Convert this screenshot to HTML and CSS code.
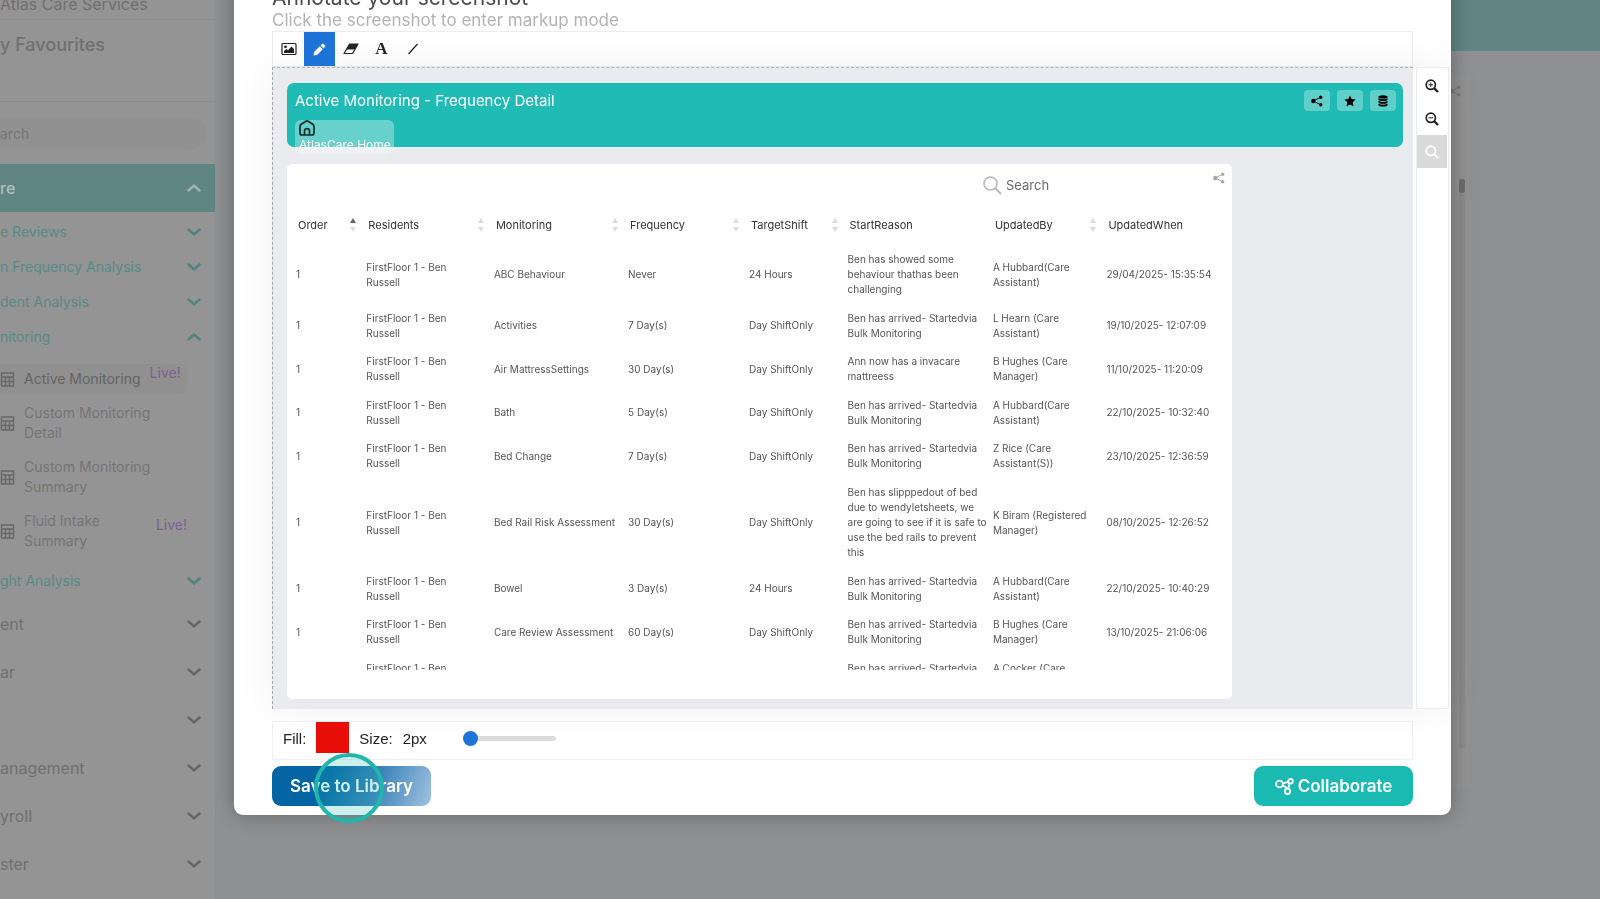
FILE: index.html
```html
<!DOCTYPE html>
<html lang="en">

<head>
    <meta charset="UTF-8">
    <meta name="viewport" content="width=device-width, initial-scale=1.0">
    <title>Active Monitoring - Frequency Detail</title>
    <link rel="stylesheet" href="styles.css">
</head>

<body>
    <svg class="sprite" aria-hidden="true">
        <symbol id="chevron" viewBox="0 0 14 8">
            <path d="M1.5 1.5 7 6.3l5.500-4.800" fill="none" stroke="currentColor" stroke-width="2.400" stroke-linecap="round" />
        </symbol>
        <symbol id="grid" viewBox="0 0 14 15">
            <path d="M1 1h12v13H1zM1 5h12M1 9.500h12M5 5v9M9 5v9" fill="none" stroke="currentColor" stroke-width="1.400" />
        </symbol>
        <symbol id="share" viewBox="0 0 12 12">
            <path d="M9.500 2.200 2.500 6l7 3.800" fill="none" stroke="currentColor" stroke-width="1" />
            <circle cx="2.300" cy="6" r="2.200" fill="currentColor" />
            <circle cx="9.700" cy="2.200" r="1.700" fill="currentColor" />
            <circle cx="9.700" cy="9.800" r="1.700" fill="currentColor" />
        </symbol>
        <symbol id="magnifier" viewBox="0 0 14 14">
            <circle cx="5.800" cy="5.800" r="4.600" fill="none" stroke="currentColor" stroke-width="1.700" />
            <path d="m9 9 4 4" stroke="currentColor" stroke-width="2.400" />
        </symbol>
    </svg>

    <div class="page">
        <nav class="sidebar">
            <div class="org">Atlas Care Services</div>
            <div class="favourites">y Favourites</div>
            <div class="search-row"><input type="text" class="side-search" placeholder="arch" aria-label="Search menu"></div>
            <a href="#" class="menu open">re<svg class="chev up"><use href="#chevron" /></svg></a>
            <a href="#" class="submenu">e Reviews<svg class="chev"><use href="#chevron" /></svg></a>
            <a href="#" class="submenu">n Frequency Analysis<svg class="chev"><use href="#chevron" /></svg></a>
            <a href="#" class="submenu">dent Analysis<svg class="chev"><use href="#chevron" /></svg></a>
            <a href="#" class="submenu">nitoring<svg class="chev up"><use href="#chevron" /></svg></a>
            <div class="reports">
                <a href="#" class="report current"><svg class="grid-icon"><use href="#grid" /></svg><span>Active Monitoring</span><em>Live!</em></a>
                <a href="#" class="report"><svg class="grid-icon"><use href="#grid" /></svg><span>Custom Monitoring<br>Detail</span></a>
                <a href="#" class="report"><svg class="grid-icon"><use href="#grid" /></svg><span>Custom Monitoring<br>Summary</span></a>
                <a href="#" class="report"><svg class="grid-icon"><use href="#grid" /></svg><span>Fluid Intake<br>Summary</span><em>Live!</em></a>
            </div>
            <a href="#" class="submenu">ght Analysis<svg class="chev"><use href="#chevron" /></svg></a>
            <a href="#" class="menu">ent<svg class="chev"><use href="#chevron" /></svg></a>
            <a href="#" class="menu">ar<svg class="chev"><use href="#chevron" /></svg></a>
            <a href="#" class="menu" aria-label="Menu"><svg class="chev"><use href="#chevron" /></svg></a>
            <a href="#" class="menu">anagement<svg class="chev"><use href="#chevron" /></svg></a>
            <a href="#" class="menu">yroll<svg class="chev"><use href="#chevron" /></svg></a>
            <a href="#" class="menu">ster<svg class="chev"><use href="#chevron" /></svg></a>
        </nav>
        <main class="backdrop-page">
            <div class="page-header"></div>
            <div class="page-card">
                <svg class="page-share"><use href="#share" /></svg>
                <div class="page-scroll"><div class="page-thumb"></div></div>
            </div>
        </main>
    </div>

    <div class="overlay">
        <section class="modal" role="dialog" aria-labelledby="modal-title">
            <h1 id="modal-title">Annotate your screenshot</h1>
            <p class="hint">Click the screenshot to enter markup mode</p>

            <div class="editor">
                <div class="toolbar">
                    <button class="tool" aria-label="Image">
                        <svg width="16" height="14" viewBox="0 0 16 14">
                            <rect x="1" y="1.500" width="14" height="11" rx="1" fill="none" stroke="currentColor" stroke-width="1.200" />
                            <circle cx="4.500" cy="4.800" r="1.400" fill="currentColor" />
                            <path d="M3 11V9l2.500-2 1.500 1.200L10.500 4.500 13 7v4z" fill="currentColor" />
                        </svg>
                    </button>
                    <button class="tool selected" aria-label="Draw">
                        <svg width="13" height="13" viewBox="0 0 13 13">
                            <path d="M.5 12.500 1 9l5.800-5.800 3 3L4 12zM7.600 2.400 9 1q.8-.8 1.600 0L12 2.400q.8.800 0 1.600l-1.400 1.400z" fill="currentColor" />
                        </svg>
                    </button>
                    <button class="tool" aria-label="Eraser">
                        <svg width="16" height="12" viewBox="0 0 16 12">
                            <path d="M6.500 1H15l-5.500 9.500H1z" fill="none" stroke="currentColor" stroke-width="1.200" stroke-linejoin="round" />
                            <path d="M6.500 1H15l-3 5.500H3.500z" fill="currentColor" />
                        </svg>
                    </button>
                    <button class="tool letter" aria-label="Text">A</button>
                    <button class="tool" aria-label="Line">
                        <svg width="12" height="12" viewBox="0 0 12 12">
                            <path d="m1.500 11 9-10" stroke="currentColor" stroke-width="1.200" />
                        </svg>
                    </button>
                </div>

                <div class="canvas-row">
                    <div class="canvas">
                        <header class="banner">
                            <div class="banner-left">
                                <h2>Active Monitoring - Frequency Detail</h2>
                                <a href="#" class="home">
                                    <svg width="16" height="16" viewBox="0 0 16 16" fill="none" stroke="currentColor" stroke-width="1.700" stroke-linejoin="round">
                                        <path d="M1 6.500Q1 5 2.200 4.200L7 1.200q1-.6 2 0l4.800 3Q15 5 15 6.500V13q0 2-2 2H3q-2 0-2-2z" />
                                        <path d="M5.500 15v-4q0-2.300 2.500-2.300t2.500 2.300v4" />
                                    </svg>
                                    <span>AtlasCare Home</span>
                                </a>
                            </div>
                            <div class="banner-actions">
                                <button aria-label="Share"><svg width="12" height="12"><use href="#share" /></svg></button>
                                <button aria-label="Favourite">
                                    <svg width="12" height="12" viewBox="0 0 12 12">
                                        <path d="m6 .5 1.700 3.600 3.900.5-2.900 2.700.8 4L6 9.400l-3.500 1.900.8-4L.4 4.600l3.900-.5z" fill="currentColor" />
                                    </svg>
                                </button>
                                <button aria-label="Data">
                                    <svg width="10" height="12" viewBox="0 0 10 12" fill="currentColor">
                                        <ellipse cx="5" cy="1.900" rx="4.600" ry="1.700" />
                                        <path d="M.4 3.300Q5 5.400 9.600 3.300v1.200Q9 6 5 6T.4 4.500zM.4 6Q5 8.100 9.600 6v1.200Q9 8.700 5 8.700T.4 7.200zM.4 8.700q4.600 2.100 9.200 0v1.200q-.6 1.700-4.600 1.700T.4 9.900z" />
                                    </svg>
                                </button>
                            </div>
                        </header>

                        <div class="report-card">
                            <div class="report-top">
                                <label class="table-search">
                                    <svg width="19" height="19" viewBox="0 0 19 19" fill="none" stroke="#b9b9b9" stroke-width="1.500">
                                        <circle cx="7.500" cy="7.500" r="6.500" />
                                        <path d="m12 12 6 6" stroke-width="2" />
                                    </svg>
                                    <input type="text" placeholder="Search" aria-label="Search">
                                </label>
                                <svg class="card-share"><use href="#share" /></svg>
                            </div>
                            <div class="table-wrap">
                                <table>
                                    <colgroup>
                                        <col class="c-order">
                                        <col class="c-resident">
                                        <col class="c-monitoring">
                                        <col class="c-frequency">
                                        <col class="c-shift">
                                        <col class="c-reason">
                                        <col class="c-by">
                                        <col class="c-when">
                                    </colgroup>
                                    <thead>
                                        <tr>
                                            <th scope="col"><div>Order<i class="sort asc"></i></div></th>
                                            <th scope="col"><div>Residents<i class="sort"></i></div></th>
                                            <th scope="col"><div>Monitoring<i class="sort"></i></div></th>
                                            <th scope="col"><div>Frequency<i class="sort"></i></div></th>
                                            <th scope="col"><div>TargetShift<i class="sort"></i></div></th>
                                            <th scope="col"><div>StartReason</div></th>
                                            <th scope="col"><div>UpdatedBy<i class="sort"></i></div></th>
                                            <th scope="col"><div>UpdatedWhen</div></th>
                                        </tr>
                                    </thead>
                                    <tbody>
                                        <tr>
                                            <td>1</td>
                                            <td>FirstFloor 1 - Ben<br>Russell</td>
                                            <td>ABC Behaviour</td>
                                            <td>Never</td>
                                            <td>24 Hours</td>
                                            <td>Ben has showed some<br>behaviour thathas been<br>challenging</td>
                                            <td>A Hubbard(Care<br>Assistant)</td>
                                            <td>29/04/2025- 15:35:54</td>
                                        </tr>
                                        <tr>
                                            <td>1</td>
                                            <td>FirstFloor 1 - Ben<br>Russell</td>
                                            <td>Activities</td>
                                            <td>7 Day(s)</td>
                                            <td>Day ShiftOnly</td>
                                            <td>Ben has arrived- Startedvia<br>Bulk Monitoring</td>
                                            <td>L Hearn (Care<br>Assistant)</td>
                                            <td>19/10/2025- 12:07:09</td>
                                        </tr>
                                        <tr>
                                            <td>1</td>
                                            <td>FirstFloor 1 - Ben<br>Russell</td>
                                            <td>Air MattressSettings</td>
                                            <td>30 Day(s)</td>
                                            <td>Day ShiftOnly</td>
                                            <td>Ann now has a invacare<br>mattreess</td>
                                            <td>B Hughes (Care<br>Manager)</td>
                                            <td>11/10/2025- 11:20:09</td>
                                        </tr>
                                        <tr>
                                            <td>1</td>
                                            <td>FirstFloor 1 - Ben<br>Russell</td>
                                            <td>Bath</td>
                                            <td>5 Day(s)</td>
                                            <td>Day ShiftOnly</td>
                                            <td>Ben has arrived- Startedvia<br>Bulk Monitoring</td>
                                            <td>A Hubbard(Care<br>Assistant)</td>
                                            <td>22/10/2025- 10:32:40</td>
                                        </tr>
                                        <tr>
                                            <td>1</td>
                                            <td>FirstFloor 1 - Ben<br>Russell</td>
                                            <td>Bed Change</td>
                                            <td>7 Day(s)</td>
                                            <td>Day ShiftOnly</td>
                                            <td>Ben has arrived- Startedvia<br>Bulk Monitoring</td>
                                            <td>Z Rice (Care<br>Assistant(S))</td>
                                            <td>23/10/2025- 12:36:59</td>
                                        </tr>
                                        <tr>
                                            <td>1</td>
                                            <td>FirstFloor 1 - Ben<br>Russell</td>
                                            <td>Bed Rail Risk Assessment</td>
                                            <td>30 Day(s)</td>
                                            <td>Day ShiftOnly</td>
                                            <td>Ben has slipppedout of bed<br>due to wendyletsheets, we<br>are going to see if it is safe to<br>use the bed rails to prevent<br>this</td>
                                            <td>K Biram (Registered<br>Manager)</td>
                                            <td>08/10/2025- 12:26:52</td>
                                        </tr>
                                        <tr>
                                            <td>1</td>
                                            <td>FirstFloor 1 - Ben<br>Russell</td>
                                            <td>Bowel</td>
                                            <td>3 Day(s)</td>
                                            <td>24 Hours</td>
                                            <td>Ben has arrived- Startedvia<br>Bulk Monitoring</td>
                                            <td>A Hubbard(Care<br>Assistant)</td>
                                            <td>22/10/2025- 10:40:29</td>
                                        </tr>
                                        <tr>
                                            <td>1</td>
                                            <td>FirstFloor 1 - Ben<br>Russell</td>
                                            <td>Care Review Assessment</td>
                                            <td>60 Day(s)</td>
                                            <td>Day ShiftOnly</td>
                                            <td>Ben has arrived- Startedvia<br>Bulk Monitoring</td>
                                            <td>B Hughes (Care<br>Manager)</td>
                                            <td>13/10/2025- 21:06:06</td>
                                        </tr>
                                        <tr class="cut-off">
                                            <td></td>
                                            <td>FirstFloor 1 - Ben</td>
                                            <td></td>
                                            <td></td>
                                            <td></td>
                                            <td>Ben has arrived- Startedvia</td>
                                            <td>A Cocker (Care</td>
                                            <td></td>
                                        </tr>
                                    </tbody>
                                </table>
                            </div>
                        </div>
                    </div>

                    <div class="zoom-rail">
                        <button aria-label="Zoom in">
                            <svg width="14" height="14" viewBox="0 0 14 14"><use href="#magnifier" /><path d="M3.500 5.800h4.600M5.800 3.500v4.600" stroke="currentColor" /></svg>
                        </button>
                        <button aria-label="Zoom out">
                            <svg width="14" height="14" viewBox="0 0 14 14"><use href="#magnifier" /><path d="M3.500 5.800h4.600" stroke="currentColor" /></svg>
                        </button>
                        <button aria-label="Reset zoom" disabled>
                            <svg width="14" height="14"><use href="#magnifier" /></svg>
                        </button>
                    </div>
                </div>

                <div class="options">
                    <span>Fill:</span>
                    <button class="swatch" aria-label="Fill colour"></button>
                    <label for="size">Size:</label>
                    <output for="size">2px</output>
                    <input type="range" id="size" min="2" max="30" value="2">
                </div>
            </div>

            <footer class="actions">
                <button class="btn save">Save to Library<span class="click-ring"></span></button>
                <button class="btn collaborate">
                    <svg width="19" height="17" viewBox="0 0 19 17" fill="none" stroke="currentColor" stroke-width="1.800">
                        <circle cx="4.500" cy="6" r="3.400" />
                        <circle cx="15.500" cy="3.300" r="2.300" />
                        <circle cx="12.500" cy="13.300" r="2.700" />
                        <path d="M7.900 5.300 13.200 3.900M14.600 5.400 13.200 10.700M7.600 7.500 10.500 9q1.200.6 1.500 1.700" />
                    </svg>
                    Collaborate
                </button>
            </footer>
        </section>
    </div>
</body>

</html>
```
FILE: styles.css
```css
* {
    box-sizing: border-box;
}

body {
    margin: 0;
    height: 100vh;
    overflow: hidden;
    background: #8e9091;
    font-family: Inter, "Open Sans", sans-serif;
}

button,
input {
    font-family: inherit;
    border: 0;
    padding: 0;
}

a {
    color: inherit;
    text-decoration: none;
}

h1,
h2,
p {
    margin: 0;
    font-weight: 400;
}

.sprite {
    display: none;
}

/* page behind the modal */
.page {
    display: flex;
    height: 100vh;
    overflow: hidden;
}

.sidebar {
    flex: none;
    width: 215px;
    background: #949494;
    color: #707070;
    font-size: 16px;
    white-space: nowrap;
}

.org {
    height: 20px;
    line-height: 8px;
    border-bottom: 1px solid #8c8c8c;
}

.favourites {
    height: 82px;
    padding-top: 12px;
    border-bottom: 1px solid #8c8c8c;
    font-size: 18px;
    font-weight: 500;
    line-height: 26px;
}

.search-row {
    padding: 15px 8px 15px 0;
}

.side-search {
    display: block;
    width: 100%;
    height: 32px;
    border-radius: 0 16px 16px 0;
    background: #919191;
    color: #707070;
    font-size: 14px;
}

.side-search::placeholder {
    color: #767676;
    opacity: 1;
}

.menu,
.submenu {
    display: flex;
    align-items: center;
    padding-right: 14px;
}

.menu {
    height: 48px;
}

.menu.open {
    margin-bottom: 2px;
    background: #5f8682;
    color: #b4bfbd;
    font-weight: 500;
}

.submenu {
    height: 35px;
    color: #568b85;
    font-size: 14px;
}

.chev {
    width: 14px;
    height: 8px;
    margin-left: auto;
    color: #656565;
}

.submenu .chev {
    color: #4c847e;
}

.menu.open .chev {
    color: #a5b3b1;
}

.chev.up {
    transform: rotate(180deg);
}

.reports {
    padding: 10px 28px 5px 0;
}

.reports + .submenu {
    margin-bottom: 2px;
}

.report {
    display: flex;
    align-items: center;
    height: 54px;
    gap: 9px;
    color: #747474;
    font-size: 14px;
    line-height: 20px;
}

.report.current {
    height: 30px;
    margin-bottom: 2px;
    border-radius: 0 8px 8px 0;
    background: #909090;
    color: #646464;
}

.report em {
    margin-left: auto;
    padding-bottom: 12px;
    color: #7b6294;
    font-style: normal;
}

.report.current em {
    margin-right: 8px;
}

.grid-icon {
    flex: none;
    width: 15px;
    height: 15px;
    color: #676767;
}

.backdrop-page {
    flex: 1;
}

.page-header {
    height: 51px;
    margin-left: 40px;
    background: #608583;
}

.page-card {
    display: flex;
    flex-direction: column;
    align-items: flex-end;
    height: 712px;
    margin: 24px 131px 0 40px;
    padding: 10px 4px 39px;
    background: #929292;
}

.page-share {
    width: 12px;
    height: 12px;
    margin-right: 4px;
    color: #787878;
}

.page-scroll {
    flex: 1;
    width: 6px;
    margin-top: 82px;
    background: #8b8b8b;
}

.page-thumb {
    height: 14px;
    border-radius: 3px;
    background: #6d6d6d;
}

/* modal */
.overlay {
    position: fixed;
    inset: 0;
    display: flex;
    flex-direction: column;
    justify-content: flex-end;
    padding: 0 149px 84px 234px;
}

.modal {
    padding: 24px 2px 9px 38px;
    border-radius: 9px;
    background: #fff;
    box-shadow: 0 0 20px rgba(0, 0, 0, .3);
}

h1 {
    color: #4a4a4a;
    font-size: 21px;
    line-height: 24px;
}

.hint {
    padding-bottom: 1px;
    color: #b3b3b3;
    font-size: 17px;
    line-height: 20px;
}

.editor {
    color: #222;
}

.toolbar {
    display: flex;
    height: 36px;
    margin-right: 36px;
    border: 1px solid #ececec;
    background: #fff;
}

.tool {
    display: flex;
    align-items: center;
    justify-content: center;
    width: 31px;
    background: none;
    color: #222;
}

.tool.selected {
    background: #1e73d8;
    color: #fff;
}

.tool.letter {
    font-family: "Liberation Serif", serif;
    font-size: 17px;
    font-weight: 700;
}

.canvas-row {
    display: flex;
    gap: 3px;
    box-shadow: 0 0 40px rgba(0, 0, 0, .06);
}

.canvas {
    flex: 1;
    min-width: 0;
    padding: 15px 10px 10px 14px;
    border-top: 1px dashed #b5b5b5;
    border-left: 1px dashed #a5a5ad;
    background: #e9ebee;
}

.banner {
    display: flex;
    justify-content: space-between;
    height: 64px;
    padding: 7px 7px 0 8px;
    border-radius: 7px;
    background: #1fbbb4;
    color: #fff;
}

h2 {
    font-size: 15px;
    line-height: 22px;
}

.home {
    display: flex;
    flex-direction: column;
    width: max-content;
    height: 34px;
    margin-top: 8px;
    padding: 0 3px 0 4px;
    border-radius: 6px;
    background: rgba(255, 255, 255, .33);
    font-size: 12px;
    line-height: 18px;
}

.home svg {
    flex: none;
    color: #0d2c2b;
}

.banner-actions {
    display: flex;
    gap: 7px;
}

.banner-actions button {
    display: flex;
    align-items: center;
    justify-content: center;
    width: 26px;
    height: 21px;
    border-radius: 4px;
    background: #5fcfca;
    color: #000;
}

.report-card {
    margin: 17px 171px 0 0;
    padding: 0 4px 29px 3px;
    border-radius: 5px;
    background: #fff;
}

.report-top {
    display: flex;
    justify-content: flex-end;
    height: 41px;
    padding: 8px 3px 0 0;
}

.table-search {
    display: flex;
    align-items: center;
    height: 26px;
    gap: 4px;
}

.table-search input {
    width: 207px;
    background: none;
    font-size: 13px;
}

.table-search input::placeholder {
    color: #6b6b6b;
    opacity: 1;
}

.card-share {
    width: 12px;
    height: 12px;
    color: #a6a6a6;
}

.table-wrap {
    height: 465px;
    overflow: hidden;
}

table {
    width: 100%;
    height: 477px;
    border-collapse: collapse;
    table-layout: fixed;
    color: #555;
    font-size: 10px;
    line-height: 15px;
    white-space: nowrap;
}

.c-order {
    width: 7.5%;
}

.c-resident {
    width: 13.6%;
}

.c-monitoring {
    width: 14.3%;
}

.c-frequency {
    width: 12.9%;
}

.c-shift {
    width: 10.5%;
}

.c-reason {
    width: 15.5%;
}

.c-by {
    width: 12.1%;
}

.c-when {
    width: 13.6%;
}

th {
    height: 40px;
    padding: 0 4px 0 8px;
    color: #333;
    font-size: 11px;
    font-weight: 400;
    text-align: left;
}

th div {
    display: flex;
    align-items: center;
    justify-content: space-between;
}

td {
    padding: 7px 6px 6px;
}

.cut-off {
    vertical-align: top;
}

.sort {
    display: flex;
    flex-direction: column;
    gap: 4px;
}

.sort::before,
.sort::after {
    content: "";
    border: 3px solid transparent;
}

.sort::before {
    border-top: 0;
    border-bottom: 5px solid #ddd;
}

.sort::after {
    border-bottom: 0;
    border-top: 5px solid #ddd;
}

.sort.asc::before {
    border-bottom-color: #666;
}

.zoom-rail {
    width: 33px;
    padding-top: 1px;
    border: 1px solid #ececec;
    background: #fff;
}

.zoom-rail button {
    display: flex;
    align-items: center;
    justify-content: center;
    width: 30px;
    height: 33px;
    background: #fff;
    color: #222;
}

.zoom-rail button:disabled {
    background: #dadada;
    color: #fff;
}

.options {
    display: flex;
    align-items: center;
    height: 39px;
    gap: 10px;
    margin: 12px 36px 0 0;
    padding: 0 0 4px 10px;
    border: 1px solid #f0f0f0;
    font-family: "Liberation Sans", Arial, sans-serif;
    font-size: 15px;
}

.swatch {
    width: 33px;
    height: 31px;
    margin-bottom: 2px;
    background: #e90d08;
}

#size {
    width: 93px;
    height: 16px;
    margin: 0 0 0 26px;
    appearance: none;
    background: none;
}

#size::-webkit-slider-runnable-track {
    height: 5px;
    border-radius: 3px;
    background: #dcdcdc;
}

#size::-webkit-slider-thumb {
    appearance: none;
    width: 15px;
    height: 15px;
    margin-top: -5px;
    border-radius: 50%;
    background: #1e73d8;
}

.actions {
    display: flex;
    justify-content: space-between;
    margin: 6px 36px 0 0;
}

.btn {
    position: relative;
    display: flex;
    align-items: center;
    justify-content: center;
    width: 159px;
    height: 40px;
    gap: 4px;
    border-radius: 9px;
    color: #fff;
    font-size: 17px;
    font-weight: 600;
}

.save {
    background: linear-gradient(110deg, #0464a4 35%, #3f83bb 65%, #9fc3df);
}

.collaborate {
    background: #1abab2;
}

/* ring marking where the pointer clicked */
.click-ring {
    position: absolute;
    top: -13px;
    left: 42px;
    width: 70px;
    height: 70px;
    border: 4px solid #20b5ad;
    border-radius: 50%;
    background: rgba(26, 186, 178, .22);
}
```
